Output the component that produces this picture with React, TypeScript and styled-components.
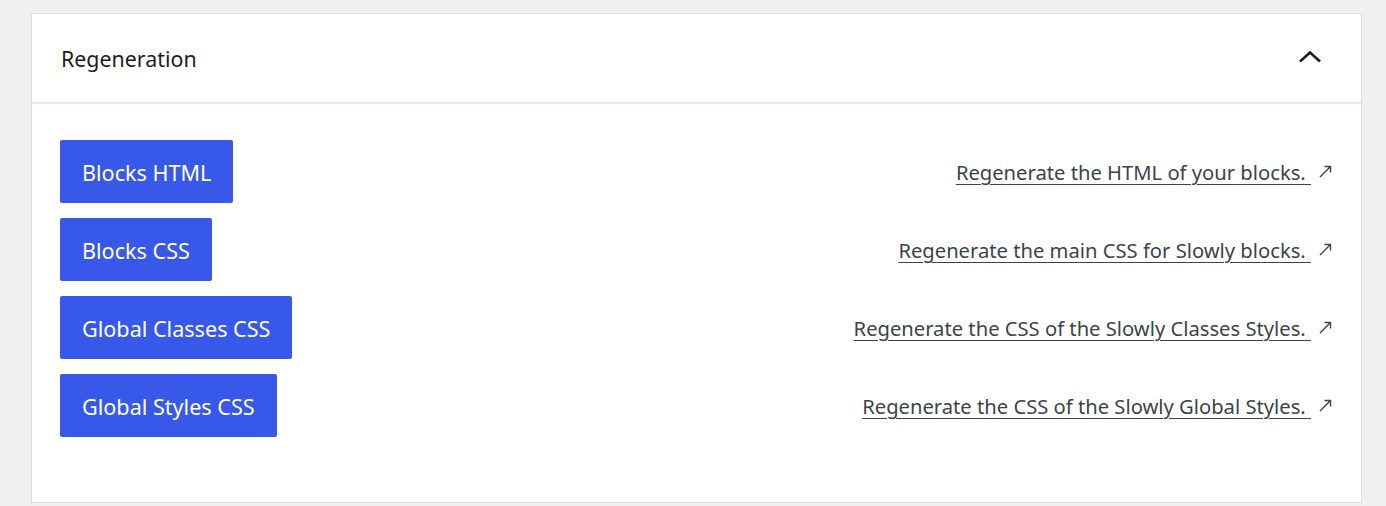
import styled, {createGlobalStyle} from 'styled-components'
import {FunctionComponent} from 'react'

const GlobalStyle = createGlobalStyle`
  body {
    margin: 0;
    background-color: #f0f0f1;
    font-family: "Noto Sans", "Open Sans", sans-serif;
  }
`

const Page = styled.div`
  padding: 13px 24px 0 31px;
`

const Card = styled.section`
  width: 1329px;
  height: 488px;
  background-color: #ffffff;
  border: 1px solid #e0e0e0;
  box-sizing: content-box;
  display: flex;
  flex-direction: column;
`

const Header = styled.div`
  height: 88px;
  display: flex;
  align-items: center;
  justify-content: space-between;
  padding: 0 39px 0 29px;
  border-bottom: 2px solid #e1e9f3;
`

const Title = styled.h2`
  margin: 0;
  font-size: 21.4px;
  font-weight: 400;
  color: #1e1e1e;
`

const Body = styled.div`
  display: flex;
  flex-direction: column;
  gap: 15px;
  padding: 36px 29px 0 28px;
`

const Row = styled.div`
  display: flex;
  align-items: center;
  justify-content: space-between;
  height: 63px;
`

const ActionButton = styled.button`
  height: 63px;
  padding: 2px 22px 0;
  border: none;
  border-radius: 2px;
  background-color: #3858e9;
  color: #ffffff;
  font-family: "Noto Sans", "Open Sans", sans-serif;
  font-size: 21.6px;
  cursor: pointer;
`

const Link = styled.a`
  display: flex;
  align-items: center;
  gap: 8px;
  color: #3c434a;
  font-size: 20.2px;
  text-decoration: none;
`

const LinkText = styled.span`
  text-decoration: underline;
  text-underline-offset: 4px;
  text-decoration-thickness: 1px;
  white-space: pre;
`

const Chevron = () => (
    <svg width="24" height="24" viewBox="0 0 24 24" fill="none">
        <path d="M2 15.5 L12 6.5 L22 15.5" stroke="#1e1e1e" strokeWidth="2.6"/>
    </svg>
)

const ExternalArrow = () => (
    <svg width="13" height="13" viewBox="0 0 13 13" fill="none">
        <path d="M1 12 L11.5 1.5 M5.5 1.5 H11.5 V7.5" stroke="#3c434a" strokeWidth="1.4"/>
    </svg>
)

interface ActionRowProps {
    label: string
    description: string
}

const ActionRow: FunctionComponent<ActionRowProps> = ({label, description}) => {
    return (
        <Row>
            <ActionButton>{label}</ActionButton>
            <Link href="#">
                <LinkText>{description + ' '}</LinkText>
                <ExternalArrow/>
            </Link>
        </Row>
    )
}

const actions: ActionRowProps[] = [
    {label: 'Blocks HTML', description: 'Regenerate the HTML of your blocks.'},
    {label: 'Blocks CSS', description: 'Regenerate the main CSS for Slowly blocks.'},
    {label: 'Global Classes CSS', description: 'Regenerate the CSS of the Slowly Classes Styles.'},
    {label: 'Global Styles CSS', description: 'Regenerate the CSS of the Slowly Global Styles.'},
]

const App = () => {
    return (
        <Page>
            <GlobalStyle/>
            <Card>
                <Header>
                    <Title>Regeneration</Title>
                    <Chevron/>
                </Header>
                <Body>
                    {actions.map(action => (
                        <ActionRow key={action.label} {...action}/>
                    ))}
                </Body>
            </Card>
        </Page>
    )
}

export default App
